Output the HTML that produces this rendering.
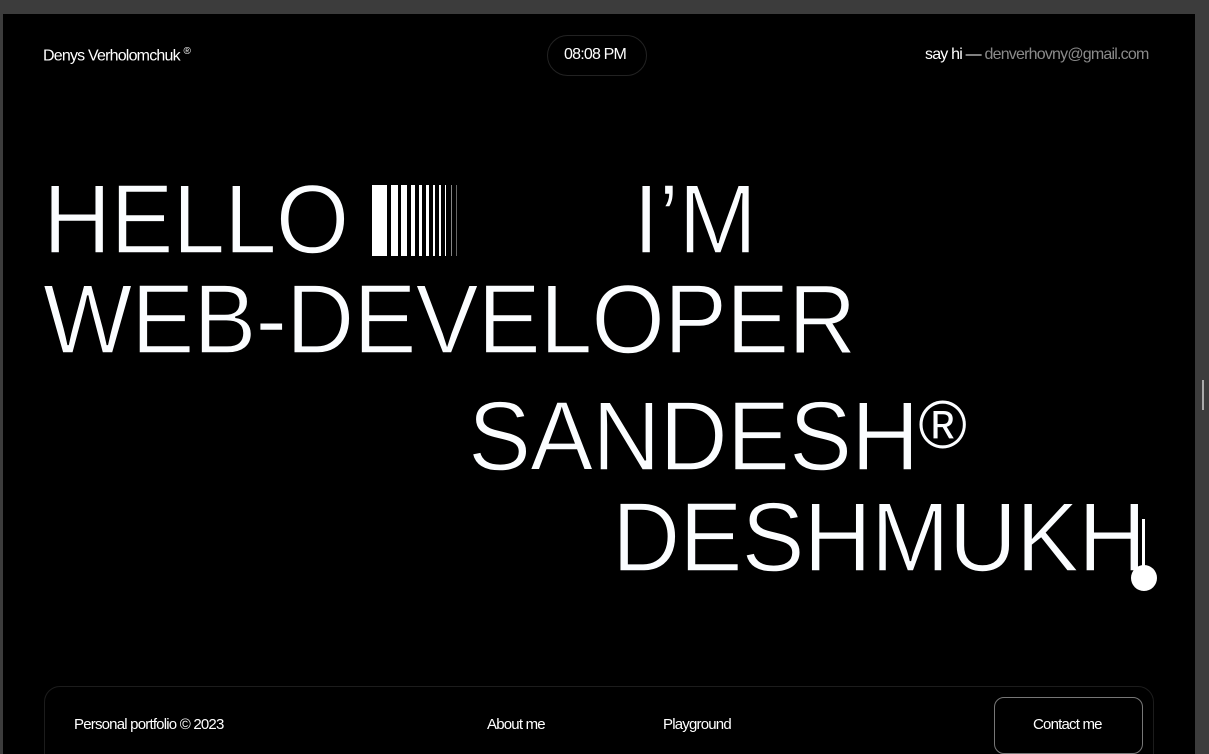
<!DOCTYPE html>
<html><head><meta charset="utf-8"><style>
*{margin:0;padding:0;box-sizing:border-box}
html,body{width:1209px;height:754px;overflow:hidden;background:#3c3c3c;font-family:"Liberation Sans",sans-serif}
#m{position:absolute;left:3px;top:14px;width:1192px;height:740px;background:#000;overflow:hidden}
.t{position:absolute;color:#fff;white-space:nowrap}
.sm{font-size:16px;letter-spacing:-0.8px}
.ft{font-size:15px;letter-spacing:-0.8px}
.big{font-size:98px;letter-spacing:-1px;line-height:1;color:#fbfdff;-webkit-text-stroke:1.5px #000;transform:scaleX(0.965);transform-origin:0 0}
.bar{position:absolute;top:171px;height:71px;background:#fff}
</style></head><body>
<div id="m">
<div class="t sm" style="left:40px;top:32px">Denys Verholomchuk <sup style="font-size:10px">®</sup></div>
<div style="position:absolute;left:544px;top:21px;width:100px;height:41px;border:1px solid #222;border-radius:21px"></div>
<div class="t sm" style="left:561px;top:32px">08:08 PM</div>
<div class="t sm" style="left:922px;top:32px">say hi — <span style="color:#8a8a8a">denverhovny@gmail.com</span></div>

<div class="t big" style="left:40px;top:156px">HELLO</div>
<div class="bar" style="left:369px;width:15px"></div>
<div class="bar" style="left:388px;width:7px"></div>
<div class="bar" style="left:398px;width:6px"></div>
<div class="bar" style="left:408px;width:4px"></div>
<div class="bar" style="left:416px;width:3px"></div>
<div class="bar" style="left:423px;width:3px"></div>
<div class="bar" style="left:430px;width:2px"></div>
<div class="bar" style="left:436px;width:2px"></div>
<div class="bar" style="left:442px;width:1px"></div>
<div class="bar" style="left:448px;width:1px;background:#888"></div>
<div class="bar" style="left:453px;width:1px;background:#666"></div>
<div class="t big" style="left:630px;top:156px">I’M</div>
<div class="t big" style="left:40px;top:256px">WEB-DEVELOPER</div>
<div class="t big" style="left:465px;top:373px">SANDESH<span style="font-size:68px;vertical-align:22px;-webkit-text-stroke:0">®</span></div>
<div class="t big" style="left:609px;top:474px">DESHMUKH</div>
<div style="position:absolute;left:1139px;top:505px;width:3px;height:58px;background:#fff"></div>
<div style="position:absolute;left:1128px;top:551px;width:26px;height:26px;border-radius:50%;background:#fff"></div>

<div style="position:absolute;left:41px;top:672px;width:1110px;height:90px;border:1px solid #1c1c1c;border-radius:16px"></div>
<div class="t ft" style="left:71px;top:702px">Personal portfolio © 2023</div>
<div class="t ft" style="left:484px;top:702px">About me</div>
<div class="t ft" style="left:660px;top:702px">Playground</div>
<div style="position:absolute;left:991px;top:683px;width:149px;height:57px;border:1px solid #777;border-radius:10px"></div>
<div class="t ft" style="left:1030px;top:702px">Contact me</div>
</div>
<div style="position:absolute;left:1202px;top:380px;width:2px;height:30px;background:#aaa"></div>
</body></html>
